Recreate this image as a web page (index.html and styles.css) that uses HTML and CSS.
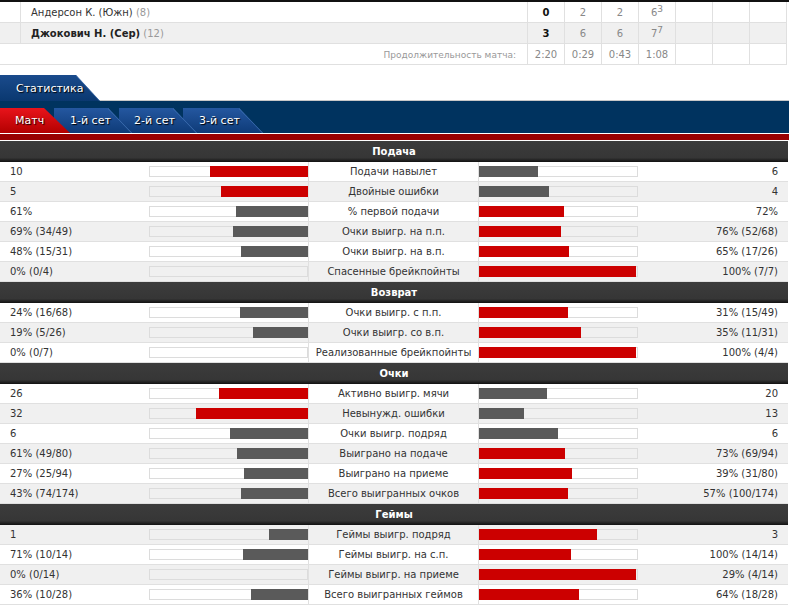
FILE: index.html
```html
<!DOCTYPE html>
<html lang="ru">
<head>
<meta charset="utf-8">
<title>Статистика матча</title>
<link rel="stylesheet" href="styles.css">
</head>
<body>
<div class="page">
  <div class="score">
    <div class="srow">
      <div class="c0"></div>
      <div class="name"><span>Андерсон К. (Южн) <span class="seed">(8)</span></span></div>
      <div class="sc tot">0</div><div class="sc">2</div><div class="sc">2</div><div class="sc"><span>6<sup>3</sup></span></div><div class="sc"></div><div class="sc"></div><div class="sc"></div>
    </div>
    <div class="srow alt">
      <div class="c0"></div>
      <div class="name"><span><b>Джокович Н. (Сер)</b> <span class="seed">(12)</span></span></div>
      <div class="sc tot">3</div><div class="sc">6</div><div class="sc">6</div><div class="sc"><span>7<sup>7</sup></span></div><div class="sc"></div><div class="sc"></div><div class="sc"></div>
    </div>
    <div class="srow">
      <div class="dur">Продолжительность матча:</div>
      <div class="sc">2:20</div><div class="sc">0:29</div><div class="sc">0:43</div><div class="sc">1:08</div><div class="sc"></div><div class="sc"></div><div class="sc"></div>
    </div>
  </div>

  <div class="maintabs">
    <div class="maintab">Статистика</div>
  </div>
  <div class="subbar">
    <div class="subtab active">Матч</div>
    <div class="subtab t1">1-й сет</div>
    <div class="subtab t2">2-й сет</div>
    <div class="subtab t3">3-й сет</div>
  </div>
  <div class="redband"></div>

  <div class="stats">
    <div class="head">Подача</div>
    <div class="row"><div class="lv">10</div><div class="lb"><div class="bar"><div class="fill red" style="width:62.5%"></div></div></div><div class="lab">Подачи навылет</div><div class="rb"><div class="bar"><div class="fill gray" style="width:37.5%"></div></div></div><div class="rv">6</div></div>
    <div class="row alt"><div class="lv">5</div><div class="lb"><div class="bar"><div class="fill red" style="width:55.6%"></div></div></div><div class="lab">Двойные ошибки</div><div class="rb"><div class="bar"><div class="fill gray" style="width:44.4%"></div></div></div><div class="rv">4</div></div>
    <div class="row"><div class="lv">61%</div><div class="lb"><div class="bar"><div class="fill gray" style="width:45.9%"></div></div></div><div class="lab">% первой подачи</div><div class="rb"><div class="bar"><div class="fill red" style="width:54.1%"></div></div></div><div class="rv">72%</div></div>
    <div class="row alt"><div class="lv">69% (34/49)</div><div class="lb"><div class="bar"><div class="fill gray" style="width:47.6%"></div></div></div><div class="lab">Очки выигр. на п.п.</div><div class="rb"><div class="bar"><div class="fill red" style="width:52.4%"></div></div></div><div class="rv">76% (52/68)</div></div>
    <div class="row"><div class="lv">48% (15/31)</div><div class="lb"><div class="bar"><div class="fill gray" style="width:42.5%"></div></div></div><div class="lab">Очки выигр. на в.п.</div><div class="rb"><div class="bar"><div class="fill red" style="width:57.5%"></div></div></div><div class="rv">65% (17/26)</div></div>
    <div class="row alt"><div class="lv">0% (0/4)</div><div class="lb"><div class="bar"><div class="fill gray" style="width:0%"></div></div></div><div class="lab">Спасенные брейкпойнты</div><div class="rb"><div class="bar"><div class="fill red" style="width:100%"></div></div></div><div class="rv">100% (7/7)</div></div>

    <div class="head">Возврат</div>
    <div class="row"><div class="lv">24% (16/68)</div><div class="lb"><div class="bar"><div class="fill gray" style="width:43.6%"></div></div></div><div class="lab">Очки выигр. с п.п.</div><div class="rb"><div class="bar"><div class="fill red" style="width:56.4%"></div></div></div><div class="rv">31% (15/49)</div></div>
    <div class="row alt"><div class="lv">19% (5/26)</div><div class="lb"><div class="bar"><div class="fill gray" style="width:35.2%"></div></div></div><div class="lab">Очки выигр. со в.п.</div><div class="rb"><div class="bar"><div class="fill red" style="width:64.8%"></div></div></div><div class="rv">35% (11/31)</div></div>
    <div class="row"><div class="lv">0% (0/7)</div><div class="lb"><div class="bar"><div class="fill gray" style="width:0%"></div></div></div><div class="lab">Реализованные брейкпойнты</div><div class="rb"><div class="bar"><div class="fill red" style="width:100%"></div></div></div><div class="rv">100% (4/4)</div></div>

    <div class="head">Очки</div>
    <div class="row"><div class="lv">26</div><div class="lb"><div class="bar"><div class="fill red" style="width:56.5%"></div></div></div><div class="lab">Активно выигр. мячи</div><div class="rb"><div class="bar"><div class="fill gray" style="width:43.5%"></div></div></div><div class="rv">20</div></div>
    <div class="row alt"><div class="lv">32</div><div class="lb"><div class="bar"><div class="fill red" style="width:71.1%"></div></div></div><div class="lab">Невынужд. ошибки</div><div class="rb"><div class="bar"><div class="fill gray" style="width:28.9%"></div></div></div><div class="rv">13</div></div>
    <div class="row"><div class="lv">6</div><div class="lb"><div class="bar"><div class="fill gray" style="width:50%"></div></div></div><div class="lab">Очки выигр. подряд</div><div class="rb"><div class="bar"><div class="fill gray" style="width:50%"></div></div></div><div class="rv">6</div></div>
    <div class="row alt"><div class="lv">61% (49/80)</div><div class="lb"><div class="bar"><div class="fill gray" style="width:45.5%"></div></div></div><div class="lab">Выиграно на подаче</div><div class="rb"><div class="bar"><div class="fill red" style="width:54.5%"></div></div></div><div class="rv">73% (69/94)</div></div>
    <div class="row"><div class="lv">27% (25/94)</div><div class="lb"><div class="bar"><div class="fill gray" style="width:40.9%"></div></div></div><div class="lab">Выиграно на приеме</div><div class="rb"><div class="bar"><div class="fill red" style="width:59.1%"></div></div></div><div class="rv">39% (31/80)</div></div>
    <div class="row alt"><div class="lv">43% (74/174)</div><div class="lb"><div class="bar"><div class="fill gray" style="width:43%"></div></div></div><div class="lab">Всего выигранных очков</div><div class="rb"><div class="bar"><div class="fill red" style="width:57%"></div></div></div><div class="rv">57% (100/174)</div></div>

    <div class="head">Геймы</div>
    <div class="row alt"><div class="lv">1</div><div class="lb"><div class="bar"><div class="fill gray" style="width:25%"></div></div></div><div class="lab">Геймы выигр. подряд</div><div class="rb"><div class="bar"><div class="fill red" style="width:75%"></div></div></div><div class="rv">3</div></div>
    <div class="row"><div class="lv">71% (10/14)</div><div class="lb"><div class="bar"><div class="fill gray" style="width:41.5%"></div></div></div><div class="lab">Геймы выигр. на с.п.</div><div class="rb"><div class="bar"><div class="fill red" style="width:58.5%"></div></div></div><div class="rv">100% (14/14)</div></div>
    <div class="row alt"><div class="lv">0% (0/14)</div><div class="lb"><div class="bar"><div class="fill gray" style="width:0%"></div></div></div><div class="lab">Геймы выигр. на приеме</div><div class="rb"><div class="bar"><div class="fill red" style="width:100%"></div></div></div><div class="rv">29% (4/14)</div></div>
    <div class="row"><div class="lv">36% (10/28)</div><div class="lb"><div class="bar"><div class="fill gray" style="width:36%"></div></div></div><div class="lab">Всего выигранных геймов</div><div class="rb"><div class="bar"><div class="fill red" style="width:64%"></div></div></div><div class="rv">64% (18/28)</div></div>
  </div>
</div>
</body>
</html>
```

FILE: styles.css
```css
* { box-sizing: border-box; }
html, body { margin: 0; padding: 0; background: #fff; }
body {
  font-family: "DejaVu Sans", "Liberation Sans", sans-serif;
  font-size: 10px;
  color: #333;
  border-top: 2px solid #111;
  overflow: hidden;
}
.page { width: 789px; }

/* scoreboard */
.score { width: 787px; border-bottom: 1px solid #e0e0e0; }
.srow {
  display: grid;
  grid-template-columns: 21px 507px repeat(7, 37px);
  height: 21px;
  border-bottom: 1px solid #e0e0e0;
}
.srow:last-child { border-bottom: none; height: 20px; }
.srow.alt { background: #f0f0f0; }
.srow > div {
  border-right: 1px solid #e0e0e0;
  display: flex;
  align-items: center;
  padding-top: 1px;
}
.name { padding-left: 10px; white-space: pre; }
.name b { color: #222; }
.seed { color: #999; font-weight: normal; }
.sc { justify-content: center; color: #888; }
.sc.tot { color: #111; font-weight: bold; }
.sc sup { font-size: 9px; line-height: 0; vertical-align: 4px; }
.dur {
  grid-column: 1 / span 2;
  justify-content: flex-end;
  padding-right: 11px;
  color: #999;
  font-size: 9px;
}

/* tabs */
.maintabs {
  display: flex;
  height: 26px;
  margin-top: 10px;
  background: linear-gradient(to top, #c8c8c8 1px, #fff 1px);
}
.maintab {
  width: 100px;
  height: 26px;
  padding-left: 16px;
  display: flex;
  align-items: center;
  color: #fff;
  font-size: 11px;
  text-shadow: 1px 1px 1px #000;
  background:
    linear-gradient(to top right, transparent calc(50% - 1px), #3f6fb0 50%, transparent calc(50% + 1px)) right top / 24px 26px no-repeat,
    linear-gradient(#1a4b8c, #0a3870);
  clip-path: polygon(0 0, 76px 0, 100% 100%, 0 100%);
}
.subbar {
  display: flex;
  height: 33px;
  padding-top: 7px;
  background: #00335f;
  border-bottom: 1px solid #fff;
}
.subtab {
  position: relative;
  height: 25px;
  display: flex;
  align-items: center;
  color: #fff;
  font-size: 11px;
  text-shadow: 1px 1px 1px #000;
  background:
    linear-gradient(to top right, transparent calc(50% - 1px), #4a7cc0 50%, transparent calc(50% + 1px)) right top / 24px 25px no-repeat,
    linear-gradient(#2457a0, #0e3b78);
  clip-path: polygon(0 0, calc(100% - 24px) 0, 100% 100%, 0 100%);
}
.subtab.active {
  width: 70px; margin-right: -16px; padding-left: 15px; z-index: 4;
  background: linear-gradient(#e8141b, #b30000);
  clip-path: polygon(0 0, 44px 0, 100% 100%, 0 100%);
}
.subtab.t1 { width: 78px; margin-right: -13px; padding-left: 16px; z-index: 3; }
.subtab.t2 { width: 78px; margin-right: -14px; padding-left: 15px; z-index: 2; }
.subtab.t3 { width: 80px; padding-left: 16px; z-index: 1; }
.redband {
  height: 7px;
  background: #990000;
  border-bottom: 1px solid #fff;
}

/* stats */
.stats { width: 788px; }
.head {
  height: 21px;
  display: flex;
  align-items: center;
  justify-content: center;
  color: #fff;
  font-weight: bold;
  background: linear-gradient(#3c3c3c, #363636 80%, #111);
}
.row {
  display: grid;
  grid-template-columns: 149px 160px 170px 160px 1fr;
  height: 20px;
  border-bottom: 1px solid #e0e0e0;
  background: #fff;
}
.row.alt { background: #f0f0f0; }
.row > div { display: flex; align-items: center; }
.lv { padding-left: 10px; }
.lb { border-right: 1px solid #e0e0e0; }
.lab { border-right: 1px solid #e0e0e0; justify-content: center; white-space: nowrap; }
.rv { justify-content: flex-end; padding-right: 10px; }
.bar {
  width: 159px;
  height: 11px;
  border: 1px solid #dcdcdc;
  display: flex;
}
.lb .bar { justify-content: flex-end; }
.fill { height: 11px; margin: -1px; }
.fill.red { background: #cc0000; }
.fill.gray { background: #5a5a5a; }
```
